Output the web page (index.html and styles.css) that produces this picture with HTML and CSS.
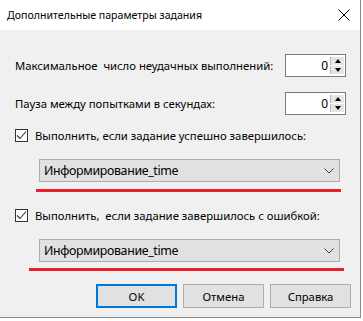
FILE: index.html
```html
<!DOCTYPE html>
<html lang="ru">
<head>
    <meta charset="UTF-8">
    <title>Дополнительные параметры задания</title>
    <link rel="stylesheet" href="styles.css">
</head>
<body>
    <div class="window">
        <div class="titlebar">
            <span class="title">Дополнительные параметры задания</span>
            <svg class="close" width="12" height="12" viewBox="0 0 12 12">
                <path d="M0.5 0.5 L11.5 11.5 M11.5 0.5 L0.5 11.5" stroke="#000" stroke-width="1" fill="none"/>
            </svg>
        </div>

        <div class="content">
            <div class="row first">
                <span class="label">Максимальное&nbsp; число неудачных выполнений:</span>
                <div class="spin">
                    <span class="spin-value">0</span>
                    <div class="spin-buttons">
                        <div class="spin-btn"><span class="tri up"></span></div>
                        <div class="spin-btn"><span class="tri down"></span></div>
                    </div>
                </div>
            </div>

            <div class="row second">
                <span class="label">Пауза между попытками в секундах:</span>
                <div class="spin">
                    <span class="spin-value">0</span>
                    <div class="spin-buttons">
                        <div class="spin-btn"><span class="tri up"></span></div>
                        <div class="spin-btn"><span class="tri down"></span></div>
                    </div>
                </div>
            </div>

            <!-- on success -->
            <label class="check check-ok">
                <span class="box">
                    <svg width="11" height="11" viewBox="0 0 11 11">
                        <path d="M1 5.5 L4 8.5 L10 1.5" stroke="#333" stroke-width="1.1" fill="none"/>
                    </svg>
                </span>
                <span>Выполнить, если задание успешно завершилось:</span>
            </label>
            <div class="combo combo-ok">
                <span>Информирование_time</span>
                <svg width="10" height="6" viewBox="0 0 10 6">
                    <path d="M0.5 0.5 L5 5 L9.5 0.5" stroke="#444" stroke-width="1" fill="none"/>
                </svg>
            </div>
            <div class="mark mark-ok"></div>

            <!-- on error -->
            <label class="check check-err">
                <span class="box">
                    <svg width="11" height="11" viewBox="0 0 11 11">
                        <path d="M1 5.5 L4 8.5 L10 1.5" stroke="#333" stroke-width="1.1" fill="none"/>
                    </svg>
                </span>
                <span>Выполнить,&nbsp; если задание завершилось с ошибкой:</span>
            </label>
            <div class="combo combo-err">
                <span>Информирование_time</span>
                <svg width="10" height="6" viewBox="0 0 10 6">
                    <path d="M0.5 0.5 L5 5 L9.5 0.5" stroke="#444" stroke-width="1" fill="none"/>
                </svg>
            </div>
            <div class="mark mark-err"></div>

            <div class="buttons">
                <button class="btn default">OK</button>
                <button class="btn">Отмена</button>
                <button class="btn">Справка</button>
            </div>
        </div>
    </div>
</body>
</html>
```

FILE: styles.css
```css
body {
    margin: 0;
    background-color: #ffffff;
    font-family: "Noto Sans", Arial, sans-serif;
    font-size: 11.3px;
    color: #000;
}

.window {
    width: 360px;
    height: 317px;
    background-color: #f0f0f0;
    border-right: 1px solid #8a8a8a;
    border-bottom: 1px solid #8a8a8a;
    display: flex;
    flex-direction: column;
    white-space: nowrap;
}

.titlebar {
    height: 30px;
    background-color: #fff;
    display: flex;
    align-items: center;
    justify-content: space-between;
    padding: 0 10px 0 7px;
}

.title {
    font-size: 10.6px;
}

.content {
    display: flex;
    flex-direction: column;
}

.row {
    display: flex;
    align-items: center;
    justify-content: space-between;
    height: 23px;
    padding-left: 15px;
    width: 331px;
}

.row.first {
    margin-top: 24px;
}

.row.second {
    margin-top: 15px;
}

.spin {
    width: 59px;
    height: 21px;
    border: 1px solid #7a7a7a;
    background-color: #fff;
    display: flex;
    align-items: center;
    justify-content: flex-end;
}

.spin-value {
    margin-right: 2px;
    font-size: 12px;
}

.spin-buttons {
    display: flex;
    flex-direction: column;
    gap: 1px;
    margin-right: 1px;
}

.spin-btn {
    width: 13px;
    height: 8px;
    background-color: #e5e5e5;
    border-left: 1px solid #b9b9b9;
    display: flex;
    align-items: center;
    justify-content: center;
}

.tri {
    width: 0;
    height: 0;
    border-left: 3px solid transparent;
    border-right: 3px solid transparent;
}

.tri.up {
    border-bottom: 4px solid #000;
}

.tri.down {
    border-top: 4px solid #000;
}

.check {
    display: flex;
    align-items: center;
    gap: 7px;
    height: 15px;
    padding-left: 15px;
}

.check-ok {
    margin-top: 13px;
}

.check-err {
    margin-top: 16px;
}

.box {
    width: 11px;
    height: 11px;
    border: 1px solid #333;
    background-color: #fff;
    display: flex;
}

.combo {
    width: 290px;
    height: 21px;
    margin-left: 39px;
    padding: 0 5px 0 4px;
    border: 1px solid #adadad;
    background-color: #e1e1e1;
    display: flex;
    align-items: center;
    justify-content: space-between;
    font-size: 12.4px;
    letter-spacing: -0.35px;
}

.combo-ok,
.combo-err {
    margin-top: 16px;
}

.mark {
    height: 3px;
    background-color: #e8202a;
}

.mark-ok {
    margin-top: 7px;
    margin-left: 36px;
    width: 305px;
}

.mark-err {
    margin-top: 6px;
    margin-left: 29px;
    width: 315px;
}

.buttons {
    display: flex;
    gap: 6px;
    margin-top: 13px;
    padding-left: 96px;
}

.btn {
    width: 81px;
    height: 24px;
    background-color: #e1e1e1;
    border: 1px solid #adadad;
    font-family: "Noto Sans", Arial, sans-serif;
    font-size: 11.3px;
    color: #000;
    padding: 0;
}

.btn.default {
    border: 2px solid #0078d7;
}
```
